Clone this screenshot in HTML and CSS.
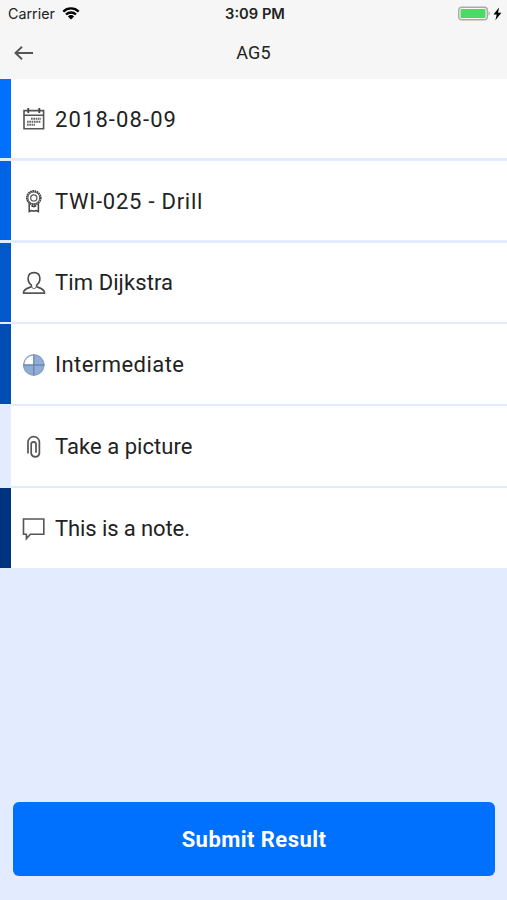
FILE: index.html
```html
<!DOCTYPE html>
<html lang="en">
<head>
    <meta charset="UTF-8">
    <meta name="viewport" content="width=device-width, initial-scale=1.0">
    <title>AG5</title>
    <link rel="stylesheet" href="styles.css">
</head>
<body>

    <div class="screen">
        <!-- Status bar and navigation -->
        <header class="header">
            <div class="status-bar">
                <div class="carrier">
                    <span class="carrier-name">Carrier</span>
                    <svg class="wifi" viewBox="0 0 18 13">
                        <path d="M1.3 4.6a11 11 0 0 1 15.4 0M4 7.5a7.2 7.2 0 0 1 10 0" fill="none" stroke="#000" stroke-width="2.3"/>
                        <path d="M5.9 9.4a4.4 4.4 0 0 1 6.2 0L9 12.5z" fill="#000"/>
                    </svg>
                </div>
                <span class="time">3:09 PM</span>
                <svg class="battery" viewBox="0 0 44 16">
                    <rect x=".7" y="1.2" width="28.6" height="12.6" rx="3" fill="#f7f7f7" stroke="#aaa" stroke-width="1.4"/>
                    <rect x="2.5" y="3" width="25" height="9" rx="1" fill="#4cd964"/>
                    <path d="M30.6 5.3q2.4 2.2 0 4.4z" fill="#999"/>
                    <path d="M41 1.5L35.5 8.6h3.2l-1.3 5.6 6-7.4h-3.3z" fill="#000"/>
                </svg>
            </div>
            <div class="nav-bar">
                <svg class="back" viewBox="0 0 20 16">
                    <path d="M19 8H2M8 1.8L1.5 8 8 14.2" fill="none" stroke="#555" stroke-width="1.9"/>
                </svg>
                <h1 class="title">AG5</h1>
            </div>
        </header>

        <!-- Form rows -->
        <main class="rows">
            <div class="row row-date">
                <svg class="icon" viewBox="0 0 24 24">
                    <path d="M2 3.6h19.6v18.2H2zM2 8.2h19.6" fill="none" stroke="#555" stroke-width="1.6"/>
                    <path d="M6.3 1v5M17.3 1v5" stroke="#444" stroke-width="1.8"/>
                    <path d="M9 11.8h10M5 14.8h14M5 17.8h8" stroke="#666" stroke-width="1.9" stroke-dasharray="1.7 .6"/>
                </svg>
                <span class="label">2018-08-09</span>
            </div>
            <div class="row row-skill">
                <svg class="icon" viewBox="0 0 24 24">
                    <circle cx="11.8" cy="8.9" r="6.9" fill="none" stroke="#444" stroke-width="1.8" stroke-dasharray="1.7 .5"/>
                    <circle cx="11.8" cy="8.9" r="5.9" fill="none" stroke="#555" stroke-width="1"/>
                    <circle cx="11.8" cy="8.9" r="3.1" fill="none" stroke="#555" stroke-width="1.2"/>
                    <path d="M7.2 14.5v8l2.3-1 2.3.8 2.3-.8 2.3 1v-8M9.4 16.8l2.4 1 2.4-1" fill="none" stroke="#444" stroke-width="1.5"/>
                </svg>
                <span class="label">TWI-025 - Drill</span>
            </div>
            <div class="row row-person">
                <svg class="icon" viewBox="0 0 24 24">
                    <path d="M9.4 14.2C7.2 12.6 6.1 10 6.1 7.3 6.1 3.8 8.5 1.6 12 1.6s5.9 2.2 5.9 5.7c0 2.7-1.1 5.3-3.3 6.9v1.6c2.8 1.1 8 1.6 8 6.5H1.4c0-4.9 5.2-5.4 8-6.5z" fill="none" stroke="#4c4c4c" stroke-width="1.6" stroke-linejoin="round"/>
                    <path d="M9.4 15.8q2.6 3.6 5.2 0M1.5 21.8h21" fill="none" stroke="#777" stroke-width="1.1"/>
                </svg>
                <span class="label">Tim Dijkstra</span>
            </div>
            <div class="row row-level">
                <svg class="icon" viewBox="0 0 24 24">
                    <circle cx="11.8" cy="12" r="10.4" fill="#fff"/>
                    <path d="M11.8 12V1.4A10.6 10.6 0 1 1 1.2 12z" fill="#91add6"/>
                    <circle cx="11.8" cy="12" r="10.1" fill="none" stroke="#8da3bf" stroke-width="1.2"/>
                    <path d="M11.8 1.4v21.2M1.2 12h21.2" stroke="#6786b1" stroke-width="1.3"/>
                </svg>
                <span class="label">Intermediate</span>
            </div>
            <div class="row row-picture">
                <svg class="icon" viewBox="0 0 24 24">
                    <path d="M6 18.5V7.3a5.6 5.6 0 0 1 11.4 0v11.2a4.2 4.2 0 0 1-8.2 0V9.2a2.4 2.4 0 0 1 4.8 0v8.5" fill="none" stroke="#555" stroke-width="1.7"/>
                </svg>
                <span class="label">Take a picture</span>
            </div>
            <div class="row row-note">
                <svg class="icon" viewBox="0 0 24 24">
                    <path d="M1.5 2h20.3v15.2H8.4L4.4 21.6v-4.4H1.5z" fill="none" stroke="#555" stroke-width="1.6"/>
                </svg>
                <span class="label">This is a note.</span>
            </div>
        </main>

        <button class="submit">Submit Result</button>
    </div>

</body>
</html>
```
FILE: styles.css
```css
* {
    box-sizing: border-box;
}

body {
    margin: 0;
    font-family: Roboto, "Liberation Sans", sans-serif;
    color: #222;
}

.screen {
    display: flex;
    flex-direction: column;
    height: 900px;
    background-color: #e2ebff;
}

/* Header */
.header {
    height: 78.8px;
    background-color: #f6f6f6;
}

.status-bar {
    display: grid;
    grid-template-columns: 1fr auto 1fr;
    align-items: center;
    height: 27px;
    padding: 0 5px 0 8px;
}

.carrier {
    display: flex;
    align-items: center;
    gap: 7px;
}

.carrier-name {
    font-family: Inter, sans-serif;
    font-size: 14.3px;
}

.wifi {
    width: 18px;
    height: 13px;
}

.time {
    font-family: Inter, sans-serif;
    font-size: 14.7px;
    font-weight: 600;
}

.battery {
    width: 44px;
    height: 16px;
    justify-self: end;
}

.nav-bar {
    display: grid;
    grid-template-columns: 1fr auto 1fr;
    align-items: center;
    height: 51px;
    padding: 0 14px;
}

.back {
    width: 20px;
    height: 16px;
}

.title {
    margin: 0;
    font-size: 18px;
    font-weight: 400;
    letter-spacing: 0.2px;
}

/* Rows */
.rows {
    display: flex;
    flex-direction: column;
    gap: 2.2px;
}

.row {
    display: flex;
    align-items: center;
    gap: 9px;
    height: 79.7px;
    padding-top: 1px;
    padding-left: 11px;
    border-left: 11px solid #e2ebff;
    background-color: #fff;
}

.row-date {
    border-left-color: #0070ff;
    letter-spacing: 1.1px;
}

.row-skill {
    border-left-color: #0064e6;
    letter-spacing: 0.75px;
}

.row-person {
    border-left-color: #0059cc;
    letter-spacing: 0.1px;
}

.row-level {
    border-left-color: #004eb3;
    letter-spacing: 0.45px;
}

.row-picture {
    letter-spacing: 0.05px;
}

.row-note {
    border-left-color: #00337f;
    letter-spacing: -0.1px;
}

.icon {
    width: 24px;
    height: 24px;
}

.label {
    font-size: 22px;
}

/* Submit */
.submit {
    height: 74px;
    margin: auto 12px 24px 13px;
    border: 0;
    border-radius: 6px;
    background-color: #0070ff;
    color: #fff;
    font-family: inherit;
    font-size: 22px;
    font-weight: 700;
    letter-spacing: 0.45px;
}
```
